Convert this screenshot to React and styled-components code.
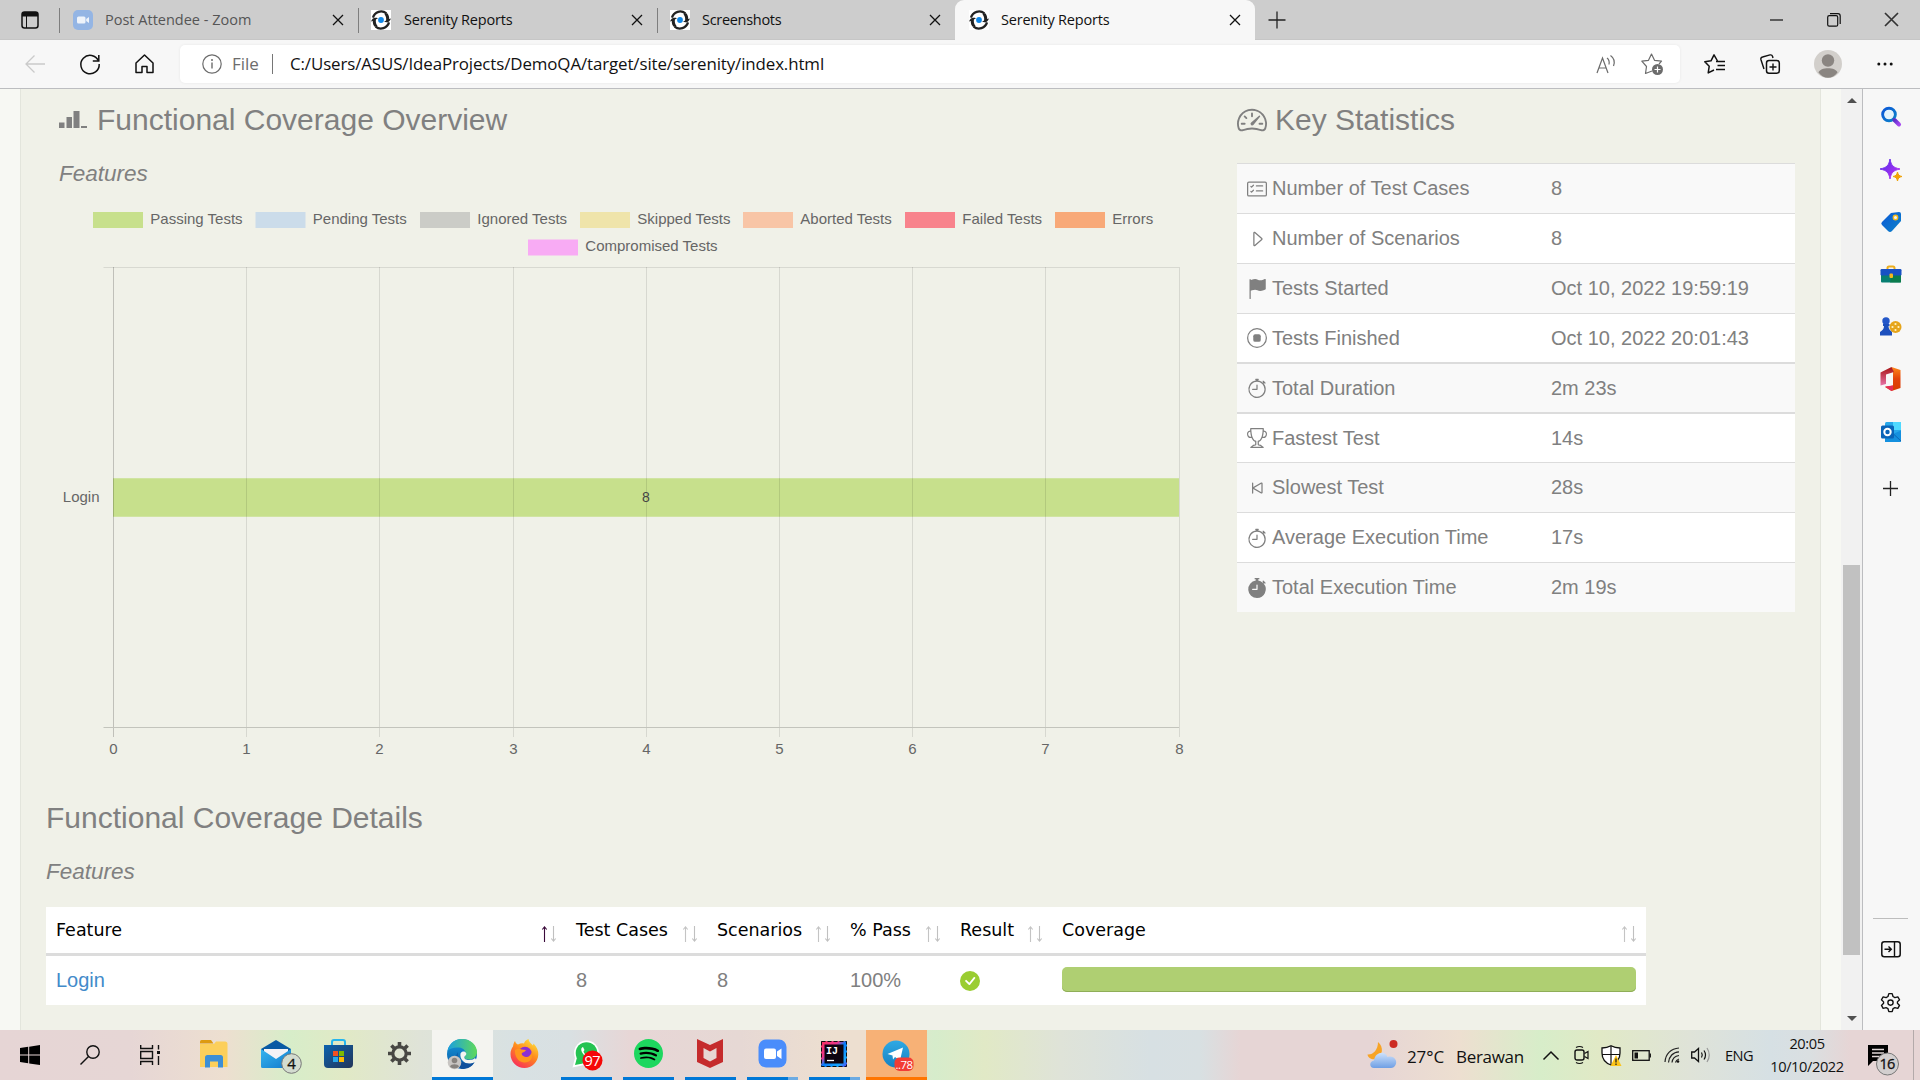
import React from "react";
import styled, { createGlobalStyle } from "styled-components";
import {
  BsSpeedometer2, BsCardChecklist, BsCaretRight, BsFlagFill, BsStopCircle,
  BsStopwatch, BsTrophy, BsSkipStart, BsStopwatchFill, BsCheckCircleFill,
} from "react-icons/bs";
import { SiSpotify } from "react-icons/si";

const ui = `"Open Sans", "Noto Sans", sans-serif`;
const page = `"Liberation Sans", Arial, sans-serif`;

const Global = createGlobalStyle`
  * { box-sizing: border-box; }
  body { margin: 0; overflow: hidden; }
  svg { display: block; flex: none; overflow: visible; }
`;
const Screen = styled.div`
  width: 1920px; height: 1080px; display: flex; flex-direction: column;
  background: #f7f7f7; font-family: ${ui}; color: #111; overflow: hidden;
`;

/* ---------- tab strip ---------- */
const TabStrip = styled.header`
  height: 40px; flex: none; display: flex; align-items: stretch; background: #cdcdcd;
  border-bottom: 1px solid #c6c6c6;
`;
const TabMenu = styled.div`
  width: 59px; display: flex; align-items: center; justify-content: center;
`;
const Tab = styled.div`
  width: ${(p) => p.$w || 299}px; height: 40px; display: flex; align-items: center;
  padding: 0 15px 0 ${(p) => p.$pl || 13}px; font-size: 14.5px; line-height: 20px; white-space: nowrap;
  letter-spacing: ${(p) => p.$ls || 0}px;
  color: ${(p) => (p.$dim ? "#555" : "#111")};
  background: ${(p) => (p.$active ? "#f7f7f7" : "transparent")};
  border-radius: ${(p) => (p.$active ? "9px 9px 0 0" : "0")};
`;
const TabRule = styled.i`
  width: 1px; height: 25px; margin: 8px 0; background: #7e7e7e;
`;
const TabTitle = styled.span`
  flex: 1; margin-left: ${(p) => p.$ml || 13}px;
`;
const NewTab = styled.div`
  width: 44px; display: flex; align-items: center; justify-content: center;
`;
const WindowButtons = styled.div`
  margin-left: auto; display: flex; width: 172px;
`;
const WindowButton = styled.div`
  width: 57.4px; display: flex; align-items: center; justify-content: center;
`;

/* ---------- address bar ---------- */
const Toolbar = styled.div`
  height: 49px; flex: none; display: flex; align-items: center; background: #f7f7f7;
  padding: 0 7px; border-bottom: 1px solid #bcbdc0;
`;
const ToolButton = styled.div`
  width: ${(p) => p.$w || 55}px; height: 48px; display: flex; align-items: center; justify-content: center;
`;
const Address = styled.div`
  width: 1500px; height: 38px; margin: 0 8px; padding: 0 6px 0 22px; display: flex; align-items: center;
  background: #fff; border-radius: 5px; box-shadow: 0 0 3px rgba(0, 0, 0, 0.07);
`;
const Scheme = styled.span`
  margin: 0 0 2px 10px; width: 40px; color: #6c6c6c; font-size: 17px;
`;
const AddressRule = styled.i`
  width: 1px; height: 20px; background: #767676; margin-right: 17px;
`;
const Url = styled.span`
  flex: 1; color: #111; font-size: 16.9px; letter-spacing: -0.11px; white-space: nowrap; margin-bottom: 2px;
`;

/* ---------- page ---------- */
const Body = styled.div`
  height: 941px; flex: none; display: flex;
`;
const Viewport = styled.div`
  width: 1841px; padding: 0 20px; background: #f7f8f3;
`;
const Panel = styled.main`
  width: 1801px; height: 941px; background: #f0f1e8; border: 1px solid #e3e5dc; border-width: 0 1px;
  font-family: ${page}; color: #808080; overflow: hidden;
`;
const Overview = styled.section`
  height: 698px; display: flex; padding-left: 38px;
`;
const ChartColumn = styled.div`
  width: 1178px;
`;
const StatsColumn = styled.div`
  width: 558px;
`;
const Heading = styled.h3`
  margin: 0; height: 60px; padding-top: 2px; display: flex; align-items: center; font-size: 30px; line-height: 58px;
  font-weight: 400; white-space: nowrap; gap: 8px;
`;
const SubHeading = styled.h4`
  margin: 0; font-size: 22.5px; line-height: 50px; font-weight: 400; font-style: italic;
`;
const StatsTable = styled.div`
  margin-top: 14px; font-size: 20px;
`;
const StatRow = styled.div`
  height: ${(p) => p.$h || 50}px; display: flex; align-items: center; white-space: nowrap;
  padding-left: 10px; border-top: ${(p) => p.$rule || 1}px solid #dcdcdc;
  background: ${(p) => (p.$odd ? "#f9f9f9" : "#fff")};
`;
const StatName = styled.span`
  width: 279px; margin-left: 5px;
`;
const Details = styled.section`
  padding-left: 25px;
`;
const Table = styled.div`
  margin-top: 10px; width: 1600px; background: #fff;
`;
const TableRow = styled.div`
  display: grid; grid-template-columns: 520px 141px 133px 110px 102px 594px; align-items: center;
  height: 49px;
  font-size: ${(p) => (p.$head ? "17.5px" : "20px")};
  font-family: ${(p) => (p.$head ? '"DejaVu Sans", sans-serif' : page)};
  color: ${(p) => (p.$head ? "#000" : "#808080")};
  border-bottom: ${(p) => (p.$head ? "3px solid #dcdcdc" : "0")};
`;
const Cell = styled.div`
  padding: 0 10px; display: flex; align-items: center; justify-content: space-between; white-space: nowrap;
`;
const Link = styled.a`
  color: #428bca;
`;
const CoverageBar = styled.div`
  width: 574px; height: 25px; border-radius: 5px; background: #afcf72; margin-top: -3px;
  box-shadow: inset 0 -1px 0 #8fae58;
`;
const Scrollbar = styled.div`
  width: 21px; background: #f1f1f1; display: flex; flex-direction: column; align-items: center; padding-top: 9px;
`;
const Thumb = styled.div`
  width: 17px; height: 390px; margin: 462px 0 61px; background: #c1c1c1;
`;
const Sidebar = styled.aside`
  width: 58px; padding: 2px 2px 0 0; border-left: 1px solid #bcbdc0; background: #f7f7f7;
  display: flex; flex-direction: column; align-items: center;
`;
const SideItem = styled.div`
  height: ${(p) => p.$h || 52.4}px; display: flex; align-items: center; justify-content: center;
`;
const SideRule = styled.i`
  width: 35px; height: 1px; background: #bdbdbd; margin-top: auto; margin-bottom: 4px;
`;

/* ---------- taskbar ---------- */
const Taskbar = styled.footer`
  height: 50px; flex: none; display: flex; color: #111;
  background: linear-gradient(90deg, #e6d5d5 0, #e6d6d5 130px, #eddfd0 225px, #d7edc9 290px, #e1e9c6 345px, #dfe3d8 420px, #d8e1e3 520px, #d9e0e2 570px, #e7d6d6 630px, #e6d8d4 740px, #eddfd0 835px, #eddfd0 865px, #d6eccb 935px, #e1e9c6 985px, #dfe3d8 1060px, #d7e0e3 1150px, #d8e0e2 1200px, #e6d5d5 1240px, #e6d5d5 1370px, #eddfd0 1460px, #d7edc9 1540px, #e1e9c6 1600px, #dfe3d8 1690px, #d6e0e4 1770px, #dadfe1 1810px, #e6d5d5 1850px, #e6d5d5 1920px);
`;
const Pin = styled.div`
  width: ${(p) => p.$w || 61}px; margin-left: ${(p) => p.$ml ?? 1}px; height: 50px;
  display: flex; flex-direction: column; align-items: center; justify-content: space-between;
  background: ${(p) => p.$bg || "transparent"};
`;
const PinIcon = styled.div`
  flex: 1; display: flex; align-items: center; justify-content: center; padding-right: ${(p) => p.$pr || 0}px;
`;
const Running = styled.i`
  width: ${(p) => p.$w}px; height: 3px;
  background: ${(p) => (p.$split ? "linear-gradient(90deg, #0078d7 41px, #6cabe3 41px)" : p.$c || "#0078d7")};
`;
const Tray = styled.div`
  margin-left: auto; display: flex; height: 50px;
`;
const TrayItem = styled.div`
  width: ${(p) => p.$w}px; display: flex; align-items: center; white-space: nowrap;
  justify-content: ${(p) => (p.$left ? "flex-start" : "center")};
  font-size: ${(p) => p.$fs || 16}px; letter-spacing: ${(p) => p.$ls || 0}px;
  padding: ${(p) => p.$pt || 0}px 0 0 ${(p) => p.$pl || 0}px;
`;
const Clock = styled.div`
  width: 100px; display: flex; flex-direction: column; align-items: center; justify-content: center;
  font-size: 14.6px; line-height: 23px; letter-spacing: -0.4px; padding-bottom: 1px;
`;
const TrayEdge = styled.i`
  width: 1px; height: 50px; background: #b3aaaa; margin-right: 6px;
`;

const Svg = ({ w, h, vb, children, ...rest }) => (
  <svg width={w} height={h || w} viewBox={vb || `0 0 ${w} ${h || w}`} fill="none" {...rest}>{children}</svg>
);
const Close = ({ s = 10, c = "#111" }) => (
  <Svg w={s} vb="0 0 10 10"><path d="M0 0L10 10M10 0L0 10" stroke={c} strokeWidth="1.3" /></Svg>
);
const SerenityLogo = () => (
  <Svg w={20}>
    <rect width="20" height="20" fill="#fff" />
    <path d="M2 7.6A8.4 8.4 0 0 1 15.4 3.4" stroke="#222" strokeWidth="2.3" />
    <path d="M18 12.4A8.4 8.4 0 0 1 4.6 16.6" stroke="#222" strokeWidth="2.3" />
    <path d="M0 11.6C1.5 7.6 4 7.2 7 8.2L4.9 9.5C4.6 12 5 14 6.5 15.8L4 17C2.4 15.500 1.700 13.500 1.800 11Z" fill="#222" />
    <path d="M20 8.400C18.500 12.400 16 12.800 13 11.800L15.100 10.500C15.400 8 15 6 13.500 4.200L16 3C17.600 4.500 18.300 6.500 18.200 9Z" fill="#222" />
    <circle cx="10" cy="10" r="2.900" fill="#1188e8" />
  </Svg>
);
const ZoomTab = () => (
  <Svg w={20}>
    <rect width="20" height="20" rx="5" fill="#94b5e4" />
    <rect x="4" y="6.500" width="8.500" height="7" rx="1.500" fill="#eef3fa" />
    <path d="M13.200 9L16 7V13L13.200 11Z" fill="#eef3fa" />
  </Svg>
);

const legend = [
  ["Passing Tests", 93, 220, "#c7e08c"], ["Pending Tests", 255.5, 220, "#cbdcea"], ["Ignored Tests", 420, 220, "#cbccc7"],
  ["Skipped Tests", 580, 220, "#efe4aa"], ["Aborted Tests", 743, 220, "#f8c5a6"], ["Failed Tests", 905, 220, "#f8838c"],
  ["Errors", 1055, 220, "#f8a978"], ["Compromised Tests", 528, 247.5, "#f8abf4"],
];
const ticks = [0, 1, 2, 3, 4, 5, 6, 7, 8];
const tickX = (n) => Math.round(113 + n * 133.2) + 0.5;

const Chart = () => (
  <Svg w={1150} h={576} vb="59 199 1150 576" fontFamily={page} fontSize="15">
    {legend.map(([name, x, y, c]) => (
      <g key={name}>
        <rect x={x} y={y - 8} width="50" height="16" fill={c} />
        <text x={x + 57.3} y={Math.floor(y + 4)} fill="#666">{name}</text>
      </g>
    ))}
    <path d="M103.500 267.500H1179" stroke="#d8d9d1" />
    <rect x="113" y="478" width="1066" height="39" fill="#c7e08c" />
    <path d="M113 478.500H1179M113 516.500H1179" stroke="#d0e4a2" />
    {ticks.map((n) => (
      <g key={n}>
        <path d={`M${tickX(n)} 267V737`} stroke="#000" strokeOpacity={n ? 0.1 : 0.2} />
        <text x={tickX(n)} y="754" textAnchor="middle" fill="#666">{n}</text>
      </g>
    ))}
    <path d="M103.500 727.500H1179" stroke="#c3c4bc" />
    <text x="99.500" y="502" textAnchor="end" fill="#666">Login</text>
    <text x="646" y="502" textAnchor="middle" fill="#444" fontSize="14">8</text>
  </Svg>
);

const stats = [
  [BsCardChecklist, "Number of Test Cases", "8"],
  [BsCaretRight, "Number of Scenarios", "8"],
  [BsFlagFill, "Tests Started", "Oct 10, 2022 19:59:19"],
  [BsStopCircle, "Tests Finished", "Oct 10, 2022 20:01:43", 1, 49],
  [BsStopwatch, "Total Duration", "2m 23s", 2],
  [BsTrophy, "Fastest Test", "14s", 2],
  [BsSkipStart, "Slowest Test", "28s"],
  [BsStopwatch, "Average Execution Time", "17s"],
  [BsStopwatchFill, "Total Execution Time", "2m 19s"],
];

const SortIcon = styled.span`
  margin: 7px 1px 0 0;
`;
const SortArrows = ({ up }) => (
  <SortIcon>
    <Svg w={14} h={18}>
      <path d="M3.500 17V2M1.300 4.500L3.500 1.800L5.700 4.500" stroke={up ? "#3a0a3a" : "#c4c4c4"} strokeWidth="1.100" />
      <path d="M12.500 1V16M10.300 13.500L12.500 16.200L14.700 13.500" stroke="#c0c0c0" strokeWidth="1.100" />
    </Svg>
  </SortIcon>
);

const Avatar = () => (
  <Svg w={28}>
    <circle cx="14" cy="14" r="14" fill="#d2cfcb" />
    <circle cx="14" cy="10.500" r="6.200" fill="#8a8581" />
    <path d="M4.500 22.500C6 16.800 22 16.800 23.500 22.500C18.500 29.500 9.500 29.500 4.500 22.500Z" fill="#8a8581" />
  </Svg>
);

const defs = (
  <defs>
    <linearGradient id="edge1" x1="0" y1="0" x2="1" y2="0"><stop stopColor="#1a9fe0" /><stop offset="1" stopColor="#5fd95b" /></linearGradient>
    <linearGradient id="edge2" x1="0" y1="0" x2="0" y2="1"><stop stopColor="#1499dd" /><stop offset="1" stopColor="#0c59a4" /></linearGradient>
    <linearGradient id="fox" x1="0.800" y1="0" x2="0.200" y2="1"><stop stopColor="#ffe33a" /><stop offset="0.450" stopColor="#ff8a1c" /><stop offset="1" stopColor="#f7275f" /></linearGradient>
    <linearGradient id="blueGrad" x1="0" y1="0" x2="1" y2="1"><stop stopColor="#0b57d8" /><stop offset="1" stopColor="#0c83c8" /></linearGradient>
    <linearGradient id="handle" x1="0" y1="0" x2="1" y2="1"><stop stopColor="#5b30c8" /><stop offset="1" stopColor="#a546f0" /></linearGradient>
    <linearGradient id="spark" x1="0" y1="0" x2="1" y2="1"><stop stopColor="#4b2be8" /><stop offset="1" stopColor="#c735f5" /></linearGradient>
    <linearGradient id="ij" x1="0" y1="0" x2="1" y2="1"><stop stopColor="#fe315d" /><stop offset="0.350" stopColor="#e8378c" /><stop offset="0.500" stopColor="#087cfa" /><stop offset="0.800" stopColor="#18a8ff" /><stop offset="1" stopColor="#5b3bf0" /></linearGradient>
    <linearGradient id="store" x1="0" y1="0" x2="1" y2="1"><stop stopColor="#0b62ae" /><stop offset="1" stopColor="#243558" /></linearGradient>
    <linearGradient id="cloud" x1="0" y1="0" x2="0" y2="1"><stop stopColor="#cfe2fb" /><stop offset="1" stopColor="#6f9fe4" /></linearGradient>
    <linearGradient id="mail" x1="0" y1="0" x2="1" y2="1"><stop stopColor="#36b5ef" /><stop offset="1" stopColor="#1179cc" /></linearGradient>
    <linearGradient id="office" x1="0" y1="0" x2="0" y2="1"><stop stopColor="#ff8a1a" /><stop offset="0.500" stopColor="#e2410c" /><stop offset="1" stopColor="#d83b01" /></linearGradient>
    <linearGradient id="officeL" x1="0" y1="0" x2="0" y2="1"><stop stopColor="#a81313" /><stop offset="1" stopColor="#e773a8" /></linearGradient>
    <linearGradient id="tg" x1="0" y1="0" x2="0" y2="1"><stop stopColor="#2fa9e4" /><stop offset="1" stopColor="#1681c2" /></linearGradient>
  </defs>
);

const sideIcons = [
  <Svg w={22}><circle cx="9" cy="8.500" r="6.300" stroke="url(#blueGrad)" strokeWidth="3" /><circle cx="9" cy="8.500" r="4.500" fill="#e3f4fc" /><path d="M14.500 14L19 18.500" stroke="url(#handle)" strokeWidth="4" strokeLinecap="round" /></Svg>,
  <Svg w={22}><path d="M10 0C11.200 6.500 13 8.500 20 10C13 11.500 11.200 13.500 10 20C8.800 13.500 7 11.500 0 10C7 8.500 8.800 6.500 10 0Z" fill="url(#spark)" stroke="url(#spark)" /><path d="M17.500 13C18.200 16 19 16.800 22 17.500C19 18.200 18.200 19 17.500 22C16.800 19 16 18.200 13 17.500C16 16.800 16.800 16 17.500 13Z" fill="#f0a30a" stroke="#f0a30a" /></Svg>,
  <Svg w={22}><path d="M11 2L19 1Q21 1 21 3V10L12 20Q10 22 8 20L2 14Q0.500 12.500 2 11Z" fill="url(#blueGrad)" /><circle cx="15.500" cy="6.500" r="2.200" fill="#eaf4ff" stroke="#f4b81c" strokeWidth="1.400" /></Svg>,
  <Svg w={22} h={18}><path d="M7.500 4V3Q7.500 1.500 9 1.500H13Q14.500 1.500 14.500 3V4" stroke="#edae1c" strokeWidth="2" /><rect x="1" y="9" width="20" height="8.500" rx="1" fill="#087f72" /><path d="M12 9H21V17.500H10Z" fill="#0c7c43" opacity=".8" /><rect x="0.500" y="4" width="21" height="6.500" rx="1.200" fill="#1851c4" /><rect x="9.500" y="8.500" width="3.500" height="4.500" rx="1" fill="#f4b81c" /></Svg>,
  <Svg w={22} h={19}><circle cx="15.500" cy="10" r="6" fill="#e6a51b" /><circle cx="15.500" cy="7" r="1.100" fill="#fff3c4" /><circle cx="18.500" cy="10" r="1.100" fill="#fff3c4" /><circle cx="12.500" cy="10" r="1.100" fill="#fff3c4" /><circle cx="15.500" cy="13" r="1.100" fill="#fff3c4" /><circle cx="6" cy="4" r="3.700" fill="#2457c9" /><path d="M3 7H9.500V9H8.500C8.500 12 10 13.500 12 15V18.500H0V15C2.500 13.500 4 12 4 9H3Z" fill="#1d50bd" /></Svg>,
  <Svg w={22} h={24}><path d="M11.500 0L20.500 3V21L11.500 24L5 20L13 18.500V5Z" fill="url(#office)" /><path d="M11.500 0L14 5L6 7.500V17L0.500 18.500V5.500Z" fill="url(#officeL)" /><path d="M5 19.500L13 18.500V23L11.500 24Z" fill="#e52b58" /></Svg>,
  <Svg w={22} h={22}><rect x="5" y="1" width="16" height="20" rx="1.500" fill="#28a8ea" /><path d="M13 1H21V9H13Z" fill="#50d9ff" /><path d="M13 13L21 9.500V20Q21 21 20 21H5V18Z" fill="#1490df" /><path d="M14 13.500L21 20" stroke="#0a67b6" /><rect x="1" y="4.500" width="13" height="13" rx="1.500" fill="#0a64b8" /><circle cx="7.500" cy="11" r="3.200" stroke="#fff" strokeWidth="2" /></Svg>,
];

const gearPath = "M8.400 1.500H11.600L12.400 4.300L14.200 5.300L17 4.600L18.600 7.400L16.600 9.400V10.800L18.600 12.800L17 15.600L14.200 14.900L12.400 15.900L11.600 18.700H8.400L7.600 15.900L5.800 14.900L3 15.600L1.400 12.800L3.400 10.800V9.400L1.400 7.400L3 4.600L5.800 5.300L7.600 4.300Z";

const pins = [
  { pr: 1, icon: <Svg w={28}><path d="M0 1.500Q0 0 1.500 0H11L13.500 3.500H0Z" fill="#dd9a11" /><path d="M0 4H14L16 1.500H25Q27.500 1.500 27.500 4V27H0Z" fill="#fccf5b" /><path d="M5 27.500V17.500Q5 15 7.500 15H20.500Q23 15 23 17.500V27.500H18V21.500H10V27.500Z" fill="#3d8fd6" /></Svg> },
  { pr: 1, icon: <Svg w={30}><path d="M0 10L15 1L30 10V14H0Z" fill="#0a5aa4" /><path d="M3 10H27V20H3Z" fill="#f4f2f6" /><path d="M0 10L15 20L30 10V27.500Q30 29 28.500 29H1.500Q0 29 0 27.500Z" fill="url(#mail)" /><circle cx="30.500" cy="24.500" r="9.800" fill="#d3dcd0" stroke="#777" /><text x="30.500" y="29.800" textAnchor="middle" fontFamily={ui} fontSize="15" fill="#111" stroke="#111" strokeWidth="0.300">4</text></Svg> },
  { pr: 1, icon: <Svg w={29}><path d="M8 7V3Q8 1 10 1H19Q21 1 21 3V7" stroke="#24b5ee" strokeWidth="2" /><path d="M0 6H29V25Q29 29 25 29H4Q0 29 0 25Z" fill="url(#store)" /><path d="M9 12H14V17H9Z" fill="#f25022" /><path d="M15 12H20V17H15Z" fill="#7fba00" /><path d="M9 18H14V23H9Z" fill="#28a8ea" /><path d="M15 18H20V23H15Z" fill="#ffb900" /></Svg> },
  { pr: 2, icon: <Svg w={23}><circle cx="11.500" cy="11.500" r="6.700" stroke="#474743" strokeWidth="3.200" /><path d="M11.500 0V4M11.500 19V23M0 11.500H4M19 11.500H23M3.400 3.400L6.200 6.200M16.800 16.800L19.600 19.600M3.400 19.600L6.200 16.800M16.800 6.200L19.600 3.400" stroke="#474743" strokeWidth="3.600" /></Svg> },
  { pr: 1, bg: "#f4f4f0", run: 61, icon: <Svg w={30}><circle cx="15" cy="15" r="15" fill="url(#edge2)" /><path d="M0.500 12C3 2 10 0 15 0C24 0 30 6.500 30 13C30 18 26 20.500 22 20.500C17.500 20.500 16.500 18.500 18 17C20 13 17 9 12 8.500C7 8 2.500 9.500 0.500 12Z" fill="url(#edge1)" /><path d="M13.500 14.500C16 10 22 14 18 17C16.500 18.500 17.500 21 22 21C25 21 27 20 28 19L30 22L24 25C17 25 12.500 20 13.500 14.500Z" fill="#f4f4f0" /><path d="M11 13C9 19 14 25 23 24.500C26 24.300 26.500 23.500 27.300 23.500C25 28 20 30 15 30C10 28 7 19 11 13Z" fill="#10509c" /><circle cx="7.500" cy="23.500" r="6.800" fill="#c8c5c2" /><circle cx="7.500" cy="21.500" r="2.800" fill="#86827e" /><path d="M3 27.500C4 24.500 11 24.500 12 27.500C10 30 5 30 3 27.500Z" fill="#86827e" /></Svg> },
  { pr: 1, icon: <Svg w={29}><path d="M3 7.500C3.500 4.500 4 3.500 5 2C5.500 4 6.500 5 8 5.500C10 4.300 12 4.200 14 4.500C14.500 3 15.500 1 18.500 0C18.500 2.500 21 4.500 23 6.500L23.500 4.500C27 8 28.500 12 28.300 15.500C28 23 22 29 14.500 29C7 29 0.500 23 0.500 15C0.500 12 1.500 9.500 3 7.500Z" fill="url(#fox)" /><circle cx="15" cy="14.500" r="6.800" fill="#8b2fd3" /><path d="M5 11C8 9 10 9.500 11.500 10.500L16 11C15 13 13 13.500 12 14C11 15 12.500 17.500 16 18C19 18.200 21 16 21.500 13C24 20 19 24 14 23.500C8 23 4.500 17 5 11Z" fill="#ff951d" /></Svg> },
  { run: 51, pr: 2, icon: <Svg w={30}><circle cx="15.500" cy="14" r="12.500" fill="#fff" /><path d="M1.500 28.500L4.500 17L13 26Z" fill="#fff" /><circle cx="15.500" cy="14" r="10.800" fill="#25c352" /><path d="M4 26L6 18.500L12 24.500Z" fill="#25c352" /><path d="M12 8C9 9 10 13 14 17C18 21 21 20 22 18L19 16L17.500 17.500C15.500 17 13 14.500 12.500 12.500L13.500 11Z" fill="#fff" /><circle cx="21.500" cy="21.500" r="10" fill="#f50808" /><text x="21.300" y="26.800" textAnchor="middle" fontFamily={ui} fontSize="14.500" letterSpacing="-0.500" fill="#fff">97</text></Svg> },
  { run: 51, pr: 1, icon: <SiSpotify size={29} color="#1ed75f" style={{ background: "radial-gradient(#000 60%, transparent 62%)" }} /> },
  { run: 51, pr: 1, icon: <Svg w={28} h={31}><path d="M1 1L14 7L27 1V24L14 30L1 24Z" fill="#c52b2c" /><path d="M7.500 10L14 13.500L20.500 10V20L14 23.500L7.500 20Z" fill="#e7d8d3" /></Svg> },
  { run: 51, pr: 1, split: true, icon: <Svg w={29}><rect x="0.500" y="0.500" width="28" height="28" rx="7.500" fill="#4a8dfb" /><rect x="6" y="9.500" width="12" height="10.500" rx="2" fill="#fff" /><path d="M19 12.500L23.500 9.500V20L19 17Z" fill="#fff" /></Svg> },
  { run: 51, pr: 2, split: true, icon: <Svg w={26}><rect width="26" height="26" fill="url(#ij)" /><rect x="0.500" y="0.500" width="25" height="25" stroke="#111" strokeDasharray="4 2" /><rect x="3.500" y="3.500" width="19" height="19" fill="#0d0410" /><text x="5" y="13" fontFamily='"Liberation Mono", monospace' fontWeight="700" fontSize="10" fill="#fff">IJ</text><path d="M6 19.500H13" stroke="#fff" strokeWidth="1.300" /></Svg> },
  { bg: "#f7b176", pr: 2, run: 61, c: "#ff7500", icon: <Svg w={28}><circle cx="14" cy="14" r="13.500" fill="url(#tg)" /><path d="M5.500 14L21 7.500L18 20.500L13 17L11 19.500L10.500 15.500Z" fill="#fff" /><rect x="12.500" y="17.500" width="19" height="13.500" rx="5" fill="#f23c35" /><text x="22" y="28.500" textAnchor="middle" fontFamily={ui} fontSize="11.500" letterSpacing="-0.500" fill="#fff">..78</text></Svg> },
];

export default function App() {
  return (
    <Screen>
      <Global />
      <svg width="0" height="0" style={{ position: "absolute" }}>{defs}</svg>
      <TabStrip>
        <TabMenu><Svg w={18}><rect x="1" y="1" width="16" height="16" rx="2.500" stroke="#111" strokeWidth="1.500" /><path d="M1 3Q1 1 3 1H15Q17 1 17 3V5.500H1Z" fill="#111" /><path d="M5.500 5V17" stroke="#111" /></Svg></TabMenu>
        <TabRule />
        <Tab $w={298} $dim><ZoomTab /><TabTitle $ml={12}>Post Attendee - Zoom</TabTitle><Close /></Tab>
        <TabRule />
        <Tab $w={298} $pl={12} $ls={-0.2}><SerenityLogo /><TabTitle>Serenity Reports</TabTitle><Close /></Tab>
        <TabRule />
        <Tab $w={297} $pl={12} $ls={-0.3}><SerenityLogo /><TabTitle $ml={12}>Screenshots</TabTitle><Close /></Tab>
        <Tab $w={300} $pl={14} $ls={-0.2} $active><SerenityLogo /><TabTitle $ml={12}>Serenity Reports</TabTitle><Close /></Tab>
        <NewTab><Svg w={18}><path d="M9 0.500V17.500M0.500 9H17.500" stroke="#222" strokeWidth="1.300" /></Svg></NewTab>
        <WindowButtons>
          <WindowButton><Svg w={13} h={2}><path d="M0 1H13" stroke="#111" strokeWidth="1.200" /></Svg></WindowButton>
          <WindowButton><Svg w={14}><rect x="0.700" y="2.700" width="10" height="10.500" rx="1.500" stroke="#111" strokeWidth="1.200" /><path d="M3 0.700H11Q13.200 0.700 13.200 3V11" stroke="#111" strokeWidth="1.200" /></Svg></WindowButton>
          <WindowButton><Close s={13} c="#333" /></WindowButton>
        </WindowButtons>
      </TabStrip>
      <Toolbar>
        <ToolButton><Svg w={20} h={18}><path d="M20 9H1M9.500 0.500L1 9L9.500 17.500" stroke="#cacaca" strokeWidth="1.300" /></Svg></ToolButton>
        <ToolButton><Svg w={20}><path d="M18.500 7A9.200 9.200 0 1 0 19.200 10" stroke="#111" strokeWidth="1.500" /><path d="M18.800 1V7H12.800" stroke="#111" strokeWidth="1.500" /></Svg></ToolButton>
        <ToolButton><Svg w={19} h={20}><path d="M1 9L9.500 1L18 9V18.500H12V12.500H7V18.500H1Z" stroke="#111" strokeWidth="1.500" strokeLinejoin="round" /></Svg></ToolButton>
        <Address>
          <Svg w={20}><circle cx="10" cy="10" r="9.200" stroke="#6c6c6c" strokeWidth="1.200" /><path d="M10 8.500V14.500" stroke="#6c6c6c" strokeWidth="1.400" /><circle cx="10" cy="6" r="1" fill="#6c6c6c" /></Svg>
          <Scheme>File</Scheme><AddressRule />
          <Url>C:/Users/ASUS/IdeaProjects/DemoQA/target/site/serenity/index.html</Url>
          <ToolButton $w={46}><Svg w={20} h={19}><path d="M1 18L6.500 3L12 18M3 13H10" stroke="#6c6c6c" strokeWidth="1.200" /><path d="M11 3C13 4.500 13.500 7 13 9.500M14.500 0.500C18 3 19 7 17.500 11" stroke="#6c6c6c" strokeWidth="1.200" /></Svg></ToolButton>
          <ToolButton $w={45}><Svg w={22}><path d="M11 18L4.500 20.500L5.500 13.500L0.800 8.200L7.500 7.300L10.500 1L13.500 7.300L20.500 8.200L18 11" stroke="#6c6c6c" strokeWidth="1.200" strokeLinejoin="round" /><circle cx="16.500" cy="16.500" r="5.500" fill="#6c6c6c" /><path d="M16.500 13.500V19.500M13.500 16.500H19.500" stroke="#fff" strokeWidth="1.200" /></Svg></ToolButton>
        </Address>
        <ToolButton $w={54}><Svg w={22} h={20}><path d="M13.500 7L10 0.900L7 6.800L0.800 7.800L5.200 12.300L4.200 18.900L10 16" stroke="#111" strokeWidth="1.500" strokeLinejoin="round" /><path d="M12 7.500H21M13.500 11.500H21M12 15.500H21" stroke="#111" strokeWidth="1.500" /></Svg></ToolButton>
        <ToolButton $w={56}><Svg w={20}><path d="M4 15L0.900 5.500Q0.500 3.500 2.500 3L10 0.900Q12 0.500 12.600 2.500L13 4" stroke="#111" strokeWidth="1.400" /><rect x="6.500" y="6.500" width="12.800" height="12.800" rx="2.500" stroke="#111" strokeWidth="1.500" /><path d="M13 9.500V16.500M9.500 13H16.500" stroke="#111" strokeWidth="1.400" /></Svg></ToolButton>
        <ToolButton $w={60}><Avatar /></ToolButton>
        <ToolButton $w={54}><Svg w={16} h={4}><circle cx="1.800" cy="2" r="1.500" fill="#111" /><circle cx="8" cy="2" r="1.500" fill="#111" /><circle cx="14.200" cy="2" r="1.500" fill="#111" /></Svg></ToolButton>
      </Toolbar>
      <Body>
        <Viewport>
          <Panel>
            <Overview>
              <ChartColumn>
                <Heading>
                  <Svg w={30} h={18}><path d="M0 11.500H5.500V17H0ZM7.500 6H13V17H7.500ZM14.500 0H20.500V17H14.500ZM22 15H28V17H22Z" fill="#808080" /></Svg>
                  Functional Coverage Overview
                </Heading>
                <SubHeading>Features</SubHeading>
                <Chart />
              </ChartColumn>
              <StatsColumn>
                <Heading><BsSpeedometer2 size={30} />Key Statistics</Heading>
                <SubHeading as="div" hidden />
                <StatsTable>
                  {stats.map(([Icon, name, value, rule, h], i) => (
                    <StatRow key={name} $odd={i % 2 === 0} $rule={rule} $h={h}>
                      <Icon size={20} /><StatName>{name}</StatName>{value}
                    </StatRow>
                  ))}
                </StatsTable>
              </StatsColumn>
            </Overview>
            <Details>
              <Heading>Functional Coverage Details</Heading>
              <SubHeading>Features</SubHeading>
              <Table>
                <TableRow $head>
                  {["Feature", "Test Cases", "Scenarios", "% Pass", "Result", "Coverage"].map((t, i) => (
                    <Cell key={t}>{t}<SortArrows up={i === 0} /></Cell>
                  ))}
                </TableRow>
                <TableRow>
                  <Cell><Link>Login</Link></Cell><Cell>8</Cell><Cell>8</Cell><Cell>100%</Cell>
                  <Cell><BsCheckCircleFill size={20} color="#9acd32" /></Cell>
                  <Cell><CoverageBar /></Cell>
                </TableRow>
              </Table>
            </Details>
          </Panel>
        </Viewport>
        <Scrollbar>
          <Svg w={10} h={5}><path d="M0 5L5 0L10 5Z" fill="#505050" /></Svg>
          <Thumb />
          <Svg w={10} h={5}><path d="M0 0L5 5L10 0Z" fill="#505050" /></Svg>
        </Scrollbar>
        <Sidebar>
          {sideIcons.map((icon, i) => <SideItem key={i}>{icon}</SideItem>)}
          <SideItem $h={62}><Svg w={15}><path d="M7.500 0V15M0 7.500H15" stroke="#222" strokeWidth="1.300" /></Svg></SideItem>
          <SideRule />
          <SideItem $h={52}><Svg w={20} h={17}><rect x="0.800" y="0.800" width="18.400" height="15" rx="2.500" stroke="#111" strokeWidth="1.500" /><path d="M13.500 1V16M3.500 8.300H10M7.500 5.500L10.300 8.300L7.500 11.100" stroke="#111" strokeWidth="1.400" /></Svg></SideItem>
          <SideItem $h={55}><Svg w={21} vb="0 0 20 20"><path d={gearPath} stroke="#111" strokeWidth="1.300" strokeLinejoin="round" /><circle cx="10" cy="10.100" r="2.500" stroke="#111" strokeWidth="1.300" /></Svg></SideItem>
        </Sidebar>
      </Body>
      <Taskbar>
        <Pin $w={60} $ml={0}><PinIcon><Svg w={20}><path d="M0 3L8.200 1.800V9.500H0ZM9.200 1.700L20 0V9.500H9.200ZM0 10.500H8.200V18.200L0 17ZM9.200 10.500H20V20L9.200 18.400Z" fill="#000" /></Svg></PinIcon></Pin>
        <Pin $w={60} $ml={0}><PinIcon><Svg w={20}><circle cx="13" cy="7" r="6.200" stroke="#111" strokeWidth="1.400" /><path d="M8.500 11.500L0.500 19.500" stroke="#111" strokeWidth="1.500" /></Svg></PinIcon></Pin>
        <Pin $w={60} $ml={0}><PinIcon><Svg w={20}><path d="M0.700 0V3.500H12.500V0M0.700 20V16.500H12.500V20M0.700 6.500H12.500V13.500H0.700ZM18.500 0V4.500M18.500 11V20" stroke="#111" strokeWidth="1.400" /><rect x="17" y="6" width="3" height="3" fill="#111" /></Svg></PinIcon></Pin>
        {pins.map((p, i) => (
          <Pin key={i} $bg={p.bg} $ml={i ? 1 : 4}>
            <PinIcon $pr={p.pr}>{p.icon}</PinIcon>
            <Running $w={p.run || 0} $split={p.split} $c={p.c} />
          </Pin>
        ))}
        <Tray>
          <TrayItem $w={40} $left><Svg w={30} h={28}><path d="M11 1C17 6 16 15 9 18C5 19 1 17 0.500 13.500C6 14 11 9 11 1Z" fill="#f7a427" /><path d="M7 27C2 27 2 20 7 19.500C8 11 18 9 20.500 16C27 14 31 20 28.500 24Q27 27 24 27Z" fill="url(#cloud)" /><circle cx="26.500" cy="3" r="4" fill="#cc2b22" /></Svg></TrayItem>
          <TrayItem $w={49} $left $fs={17} $ls={-0.1} $pt={2}>27°C</TrayItem>
          <TrayItem $w={84} $left $fs={17} $ls={-0.3} $pt={2}>Berawan</TrayItem>
          <TrayItem $w={22}><Svg w={16} h={9}><path d="M0.500 8.500L8 1L15.500 8.500" stroke="#111" strokeWidth="1.500" /></Svg></TrayItem>
          <TrayItem $w={39}><Svg w={15} h={18}><rect x="1" y="4" width="9" height="10" rx="2" stroke="#111" strokeWidth="1.400" /><path d="M10.500 7.500L14 5.500V12.500L10.500 10.500M2 1.500Q5.500 -0.500 9 1.500M2 16.500Q5.500 18.500 9 16.500" stroke="#111" strokeWidth="1.200" /></Svg></TrayItem>
          <TrayItem $w={20}><Svg w={20} h={21}><path d="M10 0.800C13 2.500 16 3 19 3V8C19 14 15.500 18 10 20C4.500 18 1 14 1 8V3C4 3 7 2.500 10 0.800Z" fill="#fff" stroke="#111" strokeWidth="1.300" /><path d="M10 1V20M1 9.500H19" stroke="#111" strokeWidth="1.200" /><path d="M15 10L20.500 21H9.500Z" fill="#fcc419" /><path d="M15 13.500V17.500M15 18.500V20" stroke="#222" strokeWidth="1.300" /></Svg></TrayItem>
          <TrayItem $w={41}><Svg w={19} h={11}><rect x="0.700" y="0.700" width="16.500" height="9.600" stroke="#111" strokeWidth="1.300" /><rect x="2.500" y="2.500" width="3.500" height="6" fill="#111" /><path d="M18.300 3.500V7.500" stroke="#111" strokeWidth="1.300" /></Svg></TrayItem>
          <TrayItem $w={19}><Svg w={16}><path d="M1 15C1.500 7 7 1.500 15 1M4.500 15.500C5 9.500 9 5 15 4.800M8 15.500C8.500 11.500 11 9 15 8.500M11.500 15.500C12 13.500 13 12.500 15 12" stroke="#222" strokeWidth="1.200" /><circle cx="14" cy="14.500" r="1.300" fill="#111" /></Svg></TrayItem>
          <TrayItem $w={40}><Svg w={20} h={16}><path d="M0.700 5V11H3.500L7.500 14.500V1.500L3.500 5Z" stroke="#111" strokeWidth="1.300" /><path d="M10.500 5.500Q12 8 10.500 10.500M13 3.500Q16 8 13 12.500" stroke="#111" strokeWidth="1.200" /><path d="M16 1Q20.500 8 16 15" stroke="#999" strokeWidth="1.200" /></Svg></TrayItem>
          <TrayItem $w={36} $fs={14.6} $ls={-0.5}>ENG</TrayItem>
          <Clock><span>20:05</span><span>10/10/2022</span></Clock>
          <TrayItem $w={56} $left $pl={11}><Svg w={31} h={30}><path d="M0 5H20V21H5L0 26Z" fill="#000" /><path d="M4 9.500H16M4 13H16M4 16.500H12" stroke="#e0d6d6" strokeWidth="1.500" /><circle cx="19.500" cy="24" r="11" fill="#d3cfcf" stroke="#777" /><text x="19" y="29.200" textAnchor="middle" fontFamily={ui} fontSize="14.500" letterSpacing="-0.800" fill="#111" stroke="#111" strokeWidth="0.300">16</text></Svg></TrayItem>
          <TrayEdge />
        </Tray>
      </Taskbar>
    </Screen>
  );
}
